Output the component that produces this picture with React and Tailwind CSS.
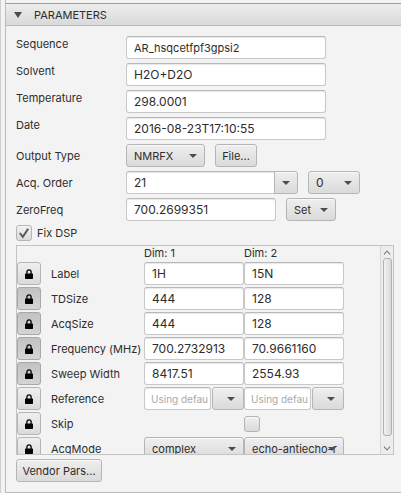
import { useState } from "react";

const raised =
  "rounded-[3px] border border-[#b5b5b5] bg-linear-to-b from-[#efefef] to-[#dadada] shadow-[inset_0_1px_0_#f8f8f8]";
const field =
  "h-[23px] min-w-0 rounded-[3px] border border-[#c8c8c8] border-t-[#b8b8b8] bg-white px-[7px] shadow-[inset_0_1px_1px_#e8e8e8] outline-none placeholder:text-[#a9a9a9]";

function Arrow({ className = "" }) {
  return (
    <svg viewBox="0 0 8 4" className={`h-1 w-2 shrink-0 ${className}`} aria-hidden="true">
      <path d="M0 0H8L4 4Z" fill="#4d4d4d" />
    </svg>
  );
}

function LockIcon() {
  return (
    <svg viewBox="0 0 8 10" className="h-[10px] w-2" aria-hidden="true">
      <path d="M1.9 5V3a2.1 2.1 0 0 1 4.2 0v2" fill="none" stroke="#000" strokeWidth="1.3" />
      <rect y="4.4" width="8" height="5.6" rx="0.7" fill="#000" />
    </svg>
  );
}

function Select({ label, options, id, className = "" }) {
  return (
    <span className={`relative flex h-[23px] ${className}`}>
      <select id={id} aria-label={label} className={`w-full appearance-none pl-[7px] outline-none ${raised}`}>
        {options.map((o) => (
          <option key={o}>{o}</option>
        ))}
      </select>
      <Arrow className="pointer-events-none absolute top-[10px] right-2" />
    </span>
  );
}

function Row({ id, label, top = false, children }) {
  return (
    <div className={`flex h-[23px] ${top ? "items-start" : "items-center"}`}>
      <label htmlFor={id} className="w-[110px] shrink-0 leading-4">
        {label}
      </label>
      {children}
    </div>
  );
}

function Lock({ name, initial }) {
  const [on, setOn] = useState(initial);
  return (
    <button
      type="button"
      aria-label={`Lock ${name}`}
      aria-pressed={on}
      onClick={() => setOn(!on)}
      className={`flex h-[23px] w-6 items-center justify-center rounded-[3px] border bg-linear-to-b ${
        on ? "border-[#a8a8a8] from-[#c2c2c2] to-[#d4d4d4]" : "border-[#b5b5b5] from-[#efefef] to-[#dadada]"
      }`}
    >
      <LockIcon />
    </button>
  );
}

const info = [
  { name: "Sequence", value: "AR_hsqcetfpf3gpsi2", size: "text-[11px]" },
  { name: "Solvent", value: "H2O+D2O", size: "text-[12px]" },
  { name: "Temperature", value: "298.0001", size: "text-[12px]" },
  { name: "Date", value: "2016-08-23T17:10:55", size: "text-[12px]" },
];

const dims = [
  { name: "Label", values: ["1H", "15N"], locked: false },
  { name: "TDSize", values: ["444", "128"], locked: true },
  { name: "AcqSize", values: ["444", "128"], locked: true },
  { name: "Frequency (MHz)", values: ["700.2732913", "70.9661160"], locked: true },
  { name: "Sweep Width", values: ["8417.51", "2554.93"], locked: true },
  { name: "Reference", kind: "reference", values: ["", ""], locked: false },
  { name: "Skip", kind: "skip", values: [null, false], locked: false },
  { name: "AcqMode", kind: "mode", values: ["complex", "echo-antiecho-r"], locked: false },
];

function Cell({ row, value, dim }) {
  const label = `${row.name}, dimension ${dim}`;
  if (row.kind === "reference") {
    return (
      <div className="flex gap-px">
        <input
          aria-label={label}
          placeholder="Using defau"
          className="h-[23px] w-[67px] min-w-0 rounded-[3px] border border-[#c8c8c8] border-t-[#b8b8b8] bg-white pl-[6px] text-[10px] shadow-[inset_0_1px_1px_#e8e8e8] outline-none placeholder:text-[#a9a9a9]"
        />
        <button type="button" aria-label={`${label} menu`} className={`flex h-[23px] w-8 items-center justify-end pr-2 ${raised}`}>
          <Arrow />
        </button>
      </div>
    );
  }
  if (row.kind === "skip") {
    return value === null ? null : (
      <input type="checkbox" aria-label={label} className={`block size-4 appearance-none ${raised}`} />
    );
  }
  if (row.kind === "mode") {
    return <Select label={label} options={[value]} className="w-full" />;
  }
  return <input aria-label={label} defaultValue={value} className={`block w-full text-[12px] ${field}`} />;
}

export default function App() {
  const [fix, setFix] = useState(true);
  return (
    <div className="flex min-h-screen bg-[#f3f3f3] font-[Inter,sans-serif] text-[11px] leading-4 text-[#2d2d2d]">
      <div className="w-[5px] shrink-0 border-r border-l border-[#f3f3f3] border-l-[#cfcfcf]" />
      <main className="min-w-0 flex-1 border-b border-l border-[#bcbcbc] pt-[3px]">
        <h1 className="h-[23px] border-t border-b border-t-[#9c9c9c] border-b-[#b9b9b9] bg-linear-to-b from-[#ededed] to-[#d9d9d9]">
          <button type="button" className="flex h-full w-full items-center gap-3 pl-2">
            <svg viewBox="0 0 8 6" className="h-[6px] w-2" aria-hidden="true">
              <path d="M0 0H8L4 6Z" fill="#4d4d4d" />
            </svg>
            PARAMETERS
          </button>
        </h1>
        <div className="flex flex-col items-stretch gap-1 pt-[10px] pr-[7px] pl-[10px]">
          {info.map(({ name, value, size }) => (
            <Row key={name} id={name} label={name} top>
              <input id={name} defaultValue={value} className={`w-[200px] ${size} ${field}`} />
            </Row>
          ))}
          <Row id="output" label="Output Type">
            <Select id="output" options={["NMRFX"]} className="w-[79px]" />
            <button type="button" className={`ml-[10px] h-[23px] w-[42px] ${raised}`}>
              File...
            </button>
          </Row>
          <Row id="order" label="Acq. Order">
            <input id="order" defaultValue="21" className={`w-[149px] rounded-r-none text-[12px] ${field}`} />
            <button
              type="button"
              aria-label="Choose acquisition order"
              className={`-ml-px flex h-[23px] w-6 items-center justify-center rounded-l-none ${raised}`}
            >
              <Arrow />
            </button>
            <Select label="Order offset" options={["0"]} className="ml-[10px] w-[52px] text-[12px]" />
          </Row>
          <Row id="zero" label="ZeroFreq">
            <input id="zero" defaultValue="700.2699351" className={`w-[150px] text-[12px] ${field}`} />
            <button type="button" className={`ml-[10px] flex h-[23px] w-[50px] items-center justify-between px-[7px] ${raised}`}>
              Set
              <Arrow />
            </button>
          </Row>
          <label className="flex h-4 items-center gap-[5px]">
            <span className="relative size-4">
              <input
                type="checkbox"
                checked={fix}
                onChange={(e) => setFix(e.target.checked)}
                className={`block size-4 appearance-none ${raised}`}
              />
              {fix && (
                <svg viewBox="0 0 16 16" className="pointer-events-none absolute inset-0" aria-hidden="true">
                  <path d="M3.8 8L6.8 11.8L12.2 3.8" fill="none" stroke="#555" strokeWidth="1.9" />
                </svg>
              )}
            </span>
            Fix DSP
          </label>

          <section className="flex h-[210px] border border-[#c4c4c4]">
            <div className="min-w-0 flex-1 overflow-hidden">
              <table className="w-[327px] table-fixed border-collapse text-left">
                <colgroup>
                  <col className="w-[127px]" />
                  <col className="w-[100px]" />
                  <col className="w-[100px]" />
                </colgroup>
                <thead>
                  <tr className="h-[15px] leading-[15px]">
                    <td className="p-0" />
                    <th className="p-0 font-normal">Dim: 1</th>
                    <th className="p-0 font-normal">Dim: 2</th>
                  </tr>
                </thead>
                <tbody>
                  {dims.map((row) => (
                    <tr key={row.name} className="h-[25px]">
                      <th className="p-0 font-normal">
                        <div className="flex items-center gap-[10px] whitespace-nowrap">
                          <Lock name={row.name} initial={row.locked} />
                          {row.name}
                        </div>
                      </th>
                      {row.values.map((value, i) => (
                        <td key={i} className="p-0">
                          <Cell row={row} value={value} dim={i + 1} />
                        </td>
                      ))}
                    </tr>
                  ))}
                </tbody>
              </table>
            </div>
            <div className="flex w-[13px] shrink-0 flex-col items-center border-l border-[#d6d6d6] bg-[#ededed]">
              <button type="button" aria-label="Scroll up" className="flex h-3 w-full items-center justify-center">
                <svg viewBox="0 0 8 5" className="h-[5px] w-2" aria-hidden="true">
                  <path d="M1 4.3L4 1L7 4.3" fill="none" stroke="#777" strokeWidth="1.1" />
                </svg>
              </button>
              <div className="h-[178px] w-[9px] rounded-[3px] border border-[#b0b0b0] bg-linear-to-r from-[#f1f1f1] to-[#d9d9d9]" />
              <button type="button" aria-label="Scroll down" className="mt-auto flex h-3 w-full items-center justify-center">
                <svg viewBox="0 0 8 5" className="h-[5px] w-2" aria-hidden="true">
                  <path d="M1 0.7L4 4L7 0.7" fill="none" stroke="#777" strokeWidth="1.1" />
                </svg>
              </button>
            </div>
          </section>

          <button type="button" className={`h-[23px] w-[86px] ${raised}`}>
            Vendor Pars...
          </button>
        </div>
      </main>
    </div>
  );
}
